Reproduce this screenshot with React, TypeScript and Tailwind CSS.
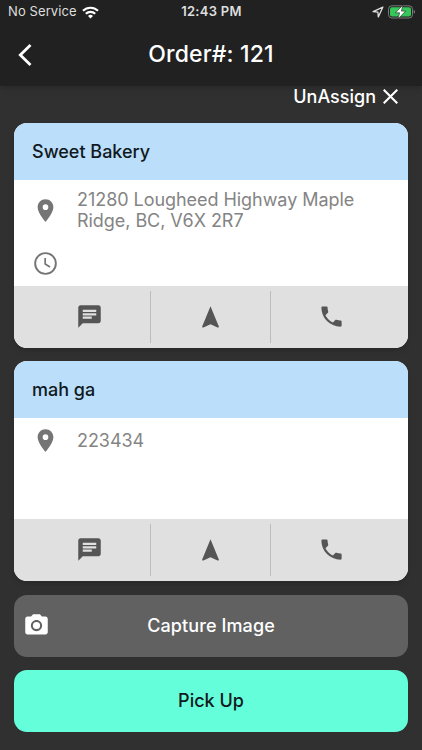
import { MdCameraAlt, MdChat, MdLocationOn, MdNavigation, MdPhone } from "react-icons/md";

function StatusBar() {
  return (
    <div className="h-6 px-2 grid grid-cols-3 items-center text-[13px] text-[#dedede]">
      <div className="flex items-center gap-[5px] whitespace-nowrap">
        <span className="tracking-[0.1px]">No Service</span>
        <svg className="w-[17px] h-[13px] shrink-0" viewBox="0 0 17 13" fill="none" stroke="#fff" strokeWidth="2.2">
          <path d="M1 4.8a10.8 10.8 0 0 1 15 0" />
          <path d="M3.8 7.8a6.8 6.8 0 0 1 9.4 0" />
          <path d="M8.5 12.6 6 10a3.6 3.6 0 0 1 5 0z" fill="#fff" stroke="none" />
        </svg>
      </div>
      <div className="text-center font-semibold tracking-[0.3px] whitespace-nowrap pl-[1px]">12:43 PM</div>
      <div className="flex items-center justify-end gap-[4px] -mr-[2px]">
        <svg className="w-[12px] h-[12px]" viewBox="0 0 11 11" fill="none" stroke="#dedede" strokeWidth="1.2" strokeLinejoin="round">
          <path d="M10 1 1 5.2l4.4.4.4 4.4z" />
        </svg>
        <svg className="w-[28px] h-[14px]" viewBox="0 0 28 14">
          <rect x="0.5" y="0.8" width="24" height="12.2" rx="3.4" fill="none" stroke="#7b7b7b" />
          <rect x="2" y="2.3" width="21" height="9.2" rx="2" fill="#35c759" />
          <path d="M25.7 4.8v4c1.8-.6 1.8-3.4 0-4z" fill="#7b7b7b" />
          <path d="M15 0 7.4 7.8h4.2L10 14l7.6-7.9h-4.2z" fill="#fff" stroke="#222" strokeWidth=".6" />
        </svg>
      </div>
    </div>
  );
}

function Actions() {
  return (
    <div className="h-[62px] shrink-0 bg-[#e0e0e0] px-4 py-[5px] grid grid-cols-3 divide-x divide-[#bdbdbd] text-[#555]">
      <button className="flex items-center justify-center pb-[2px]">
        <MdChat size={27} />
      </button>
      <button className="flex items-center justify-center">
        <MdNavigation size={27} />
      </button>
      <button className="flex items-center justify-center pb-[2px]">
        <MdPhone size={27} />
      </button>
    </div>
  );
}

type StopProps = { name: string; address: string; hasTime?: boolean; className: string };

function StopCard({ name, address, hasTime, className }: StopProps) {
  return (
    <section className={`flex flex-col rounded-[13px] overflow-hidden bg-white shadow-md ${className}`}>
      <h2 className="h-[57px] shrink-0 flex items-center px-[18px] bg-[#bbdefb] text-[18px] font-medium text-[#101820]">
        {name}
      </h2>
      <div className="flex-1 px-[18px] text-[#757575]">
        <div className={hasTime ? "h-[60px] flex items-center" : "h-[45px] flex items-center"}>
          <MdLocationOn size={27} className="shrink-0" />
          <p className="ml-[18px] w-[300px] text-[18px] leading-[21px] tracking-[-0.05px] text-[#848484]">{address}</p>
        </div>
        {hasTime && (
          <svg className="mt-[10px] w-[27px] h-[27px]" viewBox="0 0 24 24" fill="none" stroke="currentColor">
            <circle cx="12" cy="12" r="9.2" strokeWidth="1.7" />
            <path d="M11.7 7v5.4l4.3 2.7" strokeWidth="1.5" />
          </svg>
        )}
      </div>
      <Actions />
    </section>
  );
}

export default function App() {
  return (
    <div className="w-full h-[750px] bg-[#303030] font-['Inter',sans-serif] flex flex-col overflow-hidden">
      <header className="h-[86px] shrink-0 bg-[#212121] shadow-md">
        <StatusBar />
        <div className="h-[61px] px-[18px] grid grid-cols-[1fr_auto_1fr] items-center text-white">
          <svg className="w-[14px] h-[22px]" viewBox="0 0 14 22" fill="none" stroke="currentColor" strokeWidth="2.8">
            <path d="M12.5 1 2.3 11l10.2 10" />
          </svg>
          <h1 className="text-[23px] font-medium tracking-[0.15px]">Order#: 121</h1>
        </div>
      </header>

      <main className="px-[14px] flex flex-col">
        <button className="h-[37px] pb-[17px] pr-[10px] flex items-center justify-end gap-[7px] text-[18px] font-medium text-white">
          UnAssign
          <svg className="w-[15px] h-[15px]" viewBox="0 0 15 15" stroke="currentColor" strokeWidth="2.1">
            <path d="m.7.7 13.6 13.6M14.3.7.7 14.3" />
          </svg>
        </button>
        <StopCard
          name="Sweet Bakery"
          address="21280 Lougheed Highway Maple Ridge, BC, V6X 2R7"
          hasTime
          className="h-[225px]"
        />
        <StopCard name="mah ga" address="223434" className="h-[220px] mt-[13px]" />
        <button className="mt-[14px] h-[62px] rounded-[13px] bg-[#616161] px-[9px] pb-[2px] grid grid-cols-[27px_1fr_27px] items-center text-[18px] font-medium text-white">
          <MdCameraAlt size={27} />
          <span className="tracking-[0.1px]">Capture Image</span>
        </button>
        <button className="mt-[13px] h-[62px] rounded-[13px] bg-[#64ffda] pb-[1px] text-[18px] font-medium text-[#101820]">
          Pick Up
        </button>
      </main>
    </div>
  );
}
